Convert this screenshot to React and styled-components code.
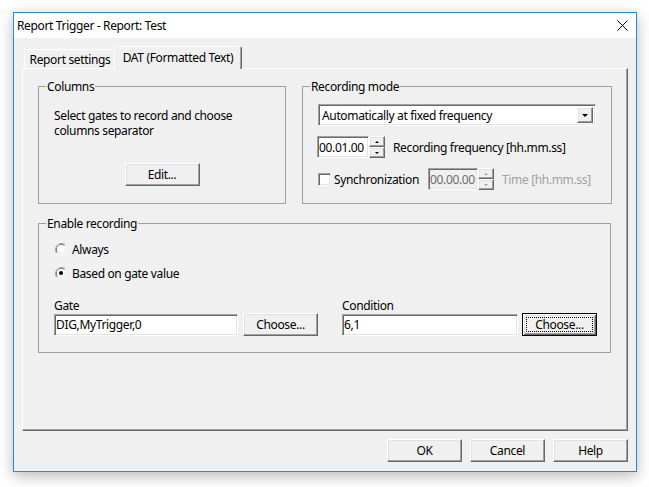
import React from 'react';
import styled, { createGlobalStyle, css } from 'styled-components';

const GlobalStyle = createGlobalStyle`
  body {
    margin: 0;
    background: #fff;
    font-family: "Noto Sans", "Liberation Sans", sans-serif;
    font-size: 12px;
    letter-spacing: -0.35px;
    color: #000;
  }
`;

const raised = css`
  border: 1px solid;
  border-color: #fff #696969 #696969 #fff;
  box-shadow: inset -1px -1px 0 #a0a0a0, inset 1px 1px 0 #e3e3e3;
`;

const sunken = css`
  border: 1px solid;
  border-color: #a0a0a0 #fff #fff #a0a0a0;
  box-shadow: inset 1px 1px 0 #696969, inset -1px -1px 0 #e3e3e3;
`;

const Screen = styled.div`
  box-sizing: border-box;
  height: 487px;
  padding: 12px 0 0 13px;
  overflow: hidden;
`;

const Window = styled.div`
  box-sizing: border-box;
  width: 624px;
  height: 460px;
  border: 1px solid #2b88d8;
  background: #f0f0f0;
  display: flex;
  flex-direction: column;
  box-shadow: 0 4px 14px rgba(0, 0, 0, 0.28);
`;

const TitleBar = styled.div`
  flex: none;
  height: 25px;
  background: #fff;
  display: flex;
  align-items: center;
  padding-left: 3px;
`;

const CloseButton = styled.div`
  margin-left: auto;
  width: 28px;
  height: 25px;
  display: flex;
  align-items: center;
  justify-content: center;
`;

const Client = styled.div`
  flex: 1;
  display: flex;
  flex-direction: column;
  padding: 8px 8px 9px;
  min-height: 0;
`;

const TabStrip = styled.div`
  flex: none;
  height: 22px;
  display: flex;
  align-items: flex-end;
  padding-left: 2px;
  position: relative;
  z-index: 1;
`;

const Tab = styled.div`
  box-sizing: border-box;
  width: ${p => p.$width}px;
  height: ${p => (p.$active ? 23 : 19)}px;
  margin: ${p => (p.$active ? '0 -2px -1px' : '0')};
  background: #f0f0f0;
  border-top: 1px solid #fff;
  border-left: 1px solid #fff;
  border-right: 1px solid #696969;
  border-radius: 2px 2px 0 0;
  box-shadow: inset -1px 0 0 #a0a0a0;
  display: flex;
  align-items: ${p => (p.$active ? 'flex-start' : 'center')};
  justify-content: center;
  padding-top: ${p => (p.$active ? '2px' : '0')};
  position: relative;
  z-index: ${p => (p.$active ? 2 : 1)};
`;

const Panel = styled.div`
  flex: 1;
  box-sizing: border-box;
  border: 1px solid;
  border-color: #fff #696969 #696969 #fff;
  box-shadow: inset -1px -1px 0 #a0a0a0;
  padding: 10px 15px 0 15px;
`;

const TopRow = styled.div`
  display: flex;
  gap: 16px;
`;

const Group = styled.fieldset`
  box-sizing: border-box;
  margin: ${p => p.$top || 0}px 0 0;
  min-width: 0;
  width: ${p => p.$width}px;
  height: ${p => p.$height}px;
  padding: ${p => p.$pad};
  border: 1px solid #a0a0a0;
  border-radius: 0;
`;

const Legend = styled.legend`
  margin-left: -8px;
  padding: 0 1px;
  line-height: 15px;
`;

const Note = styled.p`
  margin: 0;
  line-height: 15px;
`;

const Centered = styled.div`
  display: flex;
  justify-content: center;
  margin-top: 25px;
`;

const Button = styled.button`
  box-sizing: border-box;
  flex: none;
  width: 75px;
  height: 23px;
  padding: 0;
  background: #f0f0f0;
  font: inherit;
  letter-spacing: inherit;
  color: #000;
  position: relative;
  ${raised};
  ${p =>
    p.$default &&
    css`
      border: 1px solid #000;
      box-shadow: inset 1px 1px 0 #fff, inset -1px -1px 0 #696969,
        inset 2px 2px 0 #e3e3e3, inset -2px -2px 0 #a0a0a0;
      &::after {
        content: '';
        position: absolute;
        inset: 3px;
        border: 1px dotted #000;
      }
    `}
`;

const Combo = styled.div`
  box-sizing: border-box;
  width: 278px;
  height: 22px;
  background: #fff;
  display: flex;
  align-items: stretch;
  padding: 2px;
  ${sunken};
`;

const ComboText = styled.div`
  flex: 1;
  display: flex;
  align-items: center;
  padding-left: 1px;
`;

const DropButton = styled.div`
  box-sizing: border-box;
  width: 16px;
  background: #f0f0f0;
  display: flex;
  align-items: center;
  justify-content: center;
  ${raised};
`;

const Arrow = styled.span`
  width: 0;
  height: 0;
  border-left: ${p => p.$size}px solid transparent;
  border-right: ${p => p.$size}px solid transparent;
  ${p => (p.$up ? 'border-bottom' : 'border-top')}: ${p => p.$size}px solid
    ${p => (p.$disabled ? '#a0a0a0' : '#000')};
`;

const Row = styled.div`
  flex: none;
  display: flex;
  align-items: center;
  height: ${p => (p.$height ? `${p.$height}px` : 'auto')};
  margin-top: ${p => p.$gap || 0}px;
  margin-left: ${p => p.$indent || 0}px;
  white-space: nowrap;
`;

const Edit = styled.input`
  box-sizing: border-box;
  flex: none;
  width: ${p => p.$width}px;
  height: 22px;
  padding: 0 1px;
  margin: 0;
  font: inherit;
  letter-spacing: inherit;
  color: ${p => (p.disabled ? '#6d6d6d' : '#000')};
  background: ${p => (p.disabled ? '#f0f0f0' : '#fff')};
  outline: none;
  ${sunken};
`;

const SpinButtons = styled.div`
  flex: none;
  display: flex;
  flex-direction: column;
  width: 16px;
  height: 22px;
`;

const SpinHalf = styled.div`
  box-sizing: border-box;
  flex: 1;
  display: flex;
  align-items: center;
  justify-content: center;
  background: #f0f0f0;
  ${raised};
`;

const Label = styled.span`
  flex: none;
  margin-left: ${p => p.$gap || 0}px;
  color: ${p => (p.$disabled ? '#a0a0a0' : '#000')};
  white-space: nowrap;
`;

const Check = styled.span`
  box-sizing: border-box;
  flex: none;
  width: 13px;
  height: 13px;
  background: #fff;
  ${sunken};
`;

const Fields = styled.div`
  display: grid;
  grid-template-columns: 288px 1fr;
  margin-top: 13px;
`;

const Field = styled.div`
  display: flex;
  flex-direction: column;
`;

const FieldLabel = styled.div`
  line-height: 15px;
`;

const FieldRow = styled.div`
  display: flex;
  align-items: center;
  gap: ${p => p.$gap}px;
`;

const Footer = styled.div`
  display: flex;
  justify-content: flex-end;
  gap: 8px;
  margin-top: 8px;
`;

function Spin({ value, width, disabled }) {
  return (
    <>
      <Edit $width={width} defaultValue={value} disabled={disabled} readOnly />
      <SpinButtons>
        <SpinHalf>
          <Arrow $up $size={2} $disabled={disabled} />
        </SpinHalf>
        <SpinHalf>
          <Arrow $size={2} $disabled={disabled} />
        </SpinHalf>
      </SpinButtons>
    </>
  );
}

function Radio({ checked }) {
  return (
    <svg width="12" height="12" viewBox="0 0 12 12">
      <path d="M10.2 1.8 A6 6 0 0 0 1.8 10.2" fill="none" stroke="#a0a0a0" strokeWidth="1" />
      <path d="M1.8 10.2 A6 6 0 0 0 10.2 1.8" fill="none" stroke="#fff" strokeWidth="1" />
      <path d="M9.5 2.5 A5 5 0 0 0 2.5 9.5" fill="none" stroke="#696969" strokeWidth="1" />
      <path d="M2.5 9.5 A5 5 0 0 0 9.5 2.5" fill="none" stroke="#e3e3e3" strokeWidth="1" />
      <circle cx="6" cy="6" r="4" fill="#fff" />
      {checked && <circle cx="6" cy="6" r="2" fill="#000" />}
    </svg>
  );
}

export default function App() {
  return (
    <Screen>
      <GlobalStyle />
      <Window>
        <TitleBar>
          <span>Report Trigger - Report: Test</span>
          <CloseButton>
            <svg width="11" height="11" viewBox="0 0 11 11">
              <path d="M0.5 0.5 L10.5 10.5 M10.5 0.5 L0.5 10.5" stroke="#000" strokeWidth="1" />
            </svg>
          </CloseButton>
        </TitleBar>
        <Client>
          <TabStrip>
            <Tab $width={92}>Report settings</Tab>
            <Tab $width={128} $active>DAT (Formatted Text)</Tab>
          </TabStrip>
          <Panel>
            <TopRow>
              <Group $width={248} $height={125} $pad="14px 15px 0">
                <Legend>Columns</Legend>
                <Note>
                  Select gates to record and choose
                  <br />
                  columns separator
                </Note>
                <Centered>
                  <Button>Edit...</Button>
                </Centered>
              </Group>
              <Group $width={310} $height={125} $pad="10px 15px 0">
                <Legend>Recording mode</Legend>
                <Combo>
                  <ComboText>Automatically at fixed frequency</ComboText>
                  <DropButton>
                    <Arrow $size={3} />
                  </DropButton>
                </Combo>
                <Row $gap={10} $indent={-1}>
                  <Spin value="00.01.00" width={52} />
                  <Label $gap={8}>Recording frequency [hh.mm.ss]</Label>
                </Row>
                <Row $gap={10}>
                  <Check />
                  <Label $gap={3}>Synchronization</Label>
                  <Row $indent={9}>
                    <Spin value="00.00.00" width={50} disabled />
                  </Row>
                  <Label $gap={8} $disabled>Time [hh.mm.ss]</Label>
                </Row>
              </Group>
            </TopRow>
            <Group $width={573} $height={137} $top={12} $pad="0 15px 0">
              <Legend>Enable recording</Legend>
              <Row $gap={6} $indent={1} $height={24}>
                <Radio />
                <Label $gap={5}>Always</Label>
              </Row>
              <Row $indent={1} $height={24}>
                <Radio checked />
                <Label $gap={5}>Based on gate value</Label>
              </Row>
              <Fields>
                <Field>
                  <FieldLabel>Gate</FieldLabel>
                  <FieldRow $gap={5}>
                    <Edit $width={184} defaultValue="DIG,MyTrigger,0" readOnly />
                    <Button>Choose...</Button>
                  </FieldRow>
                </Field>
                <Field>
                  <FieldLabel>Condition</FieldLabel>
                  <FieldRow $gap={4}>
                    <Edit $width={176} defaultValue="6,1" readOnly />
                    <Button $default>Choose...</Button>
                  </FieldRow>
                </Field>
              </Fields>
            </Group>
          </Panel>
          <Footer>
            <Button>OK</Button>
            <Button>Cancel</Button>
            <Button>Help</Button>
          </Footer>
        </Client>
      </Window>
    </Screen>
  );
}
